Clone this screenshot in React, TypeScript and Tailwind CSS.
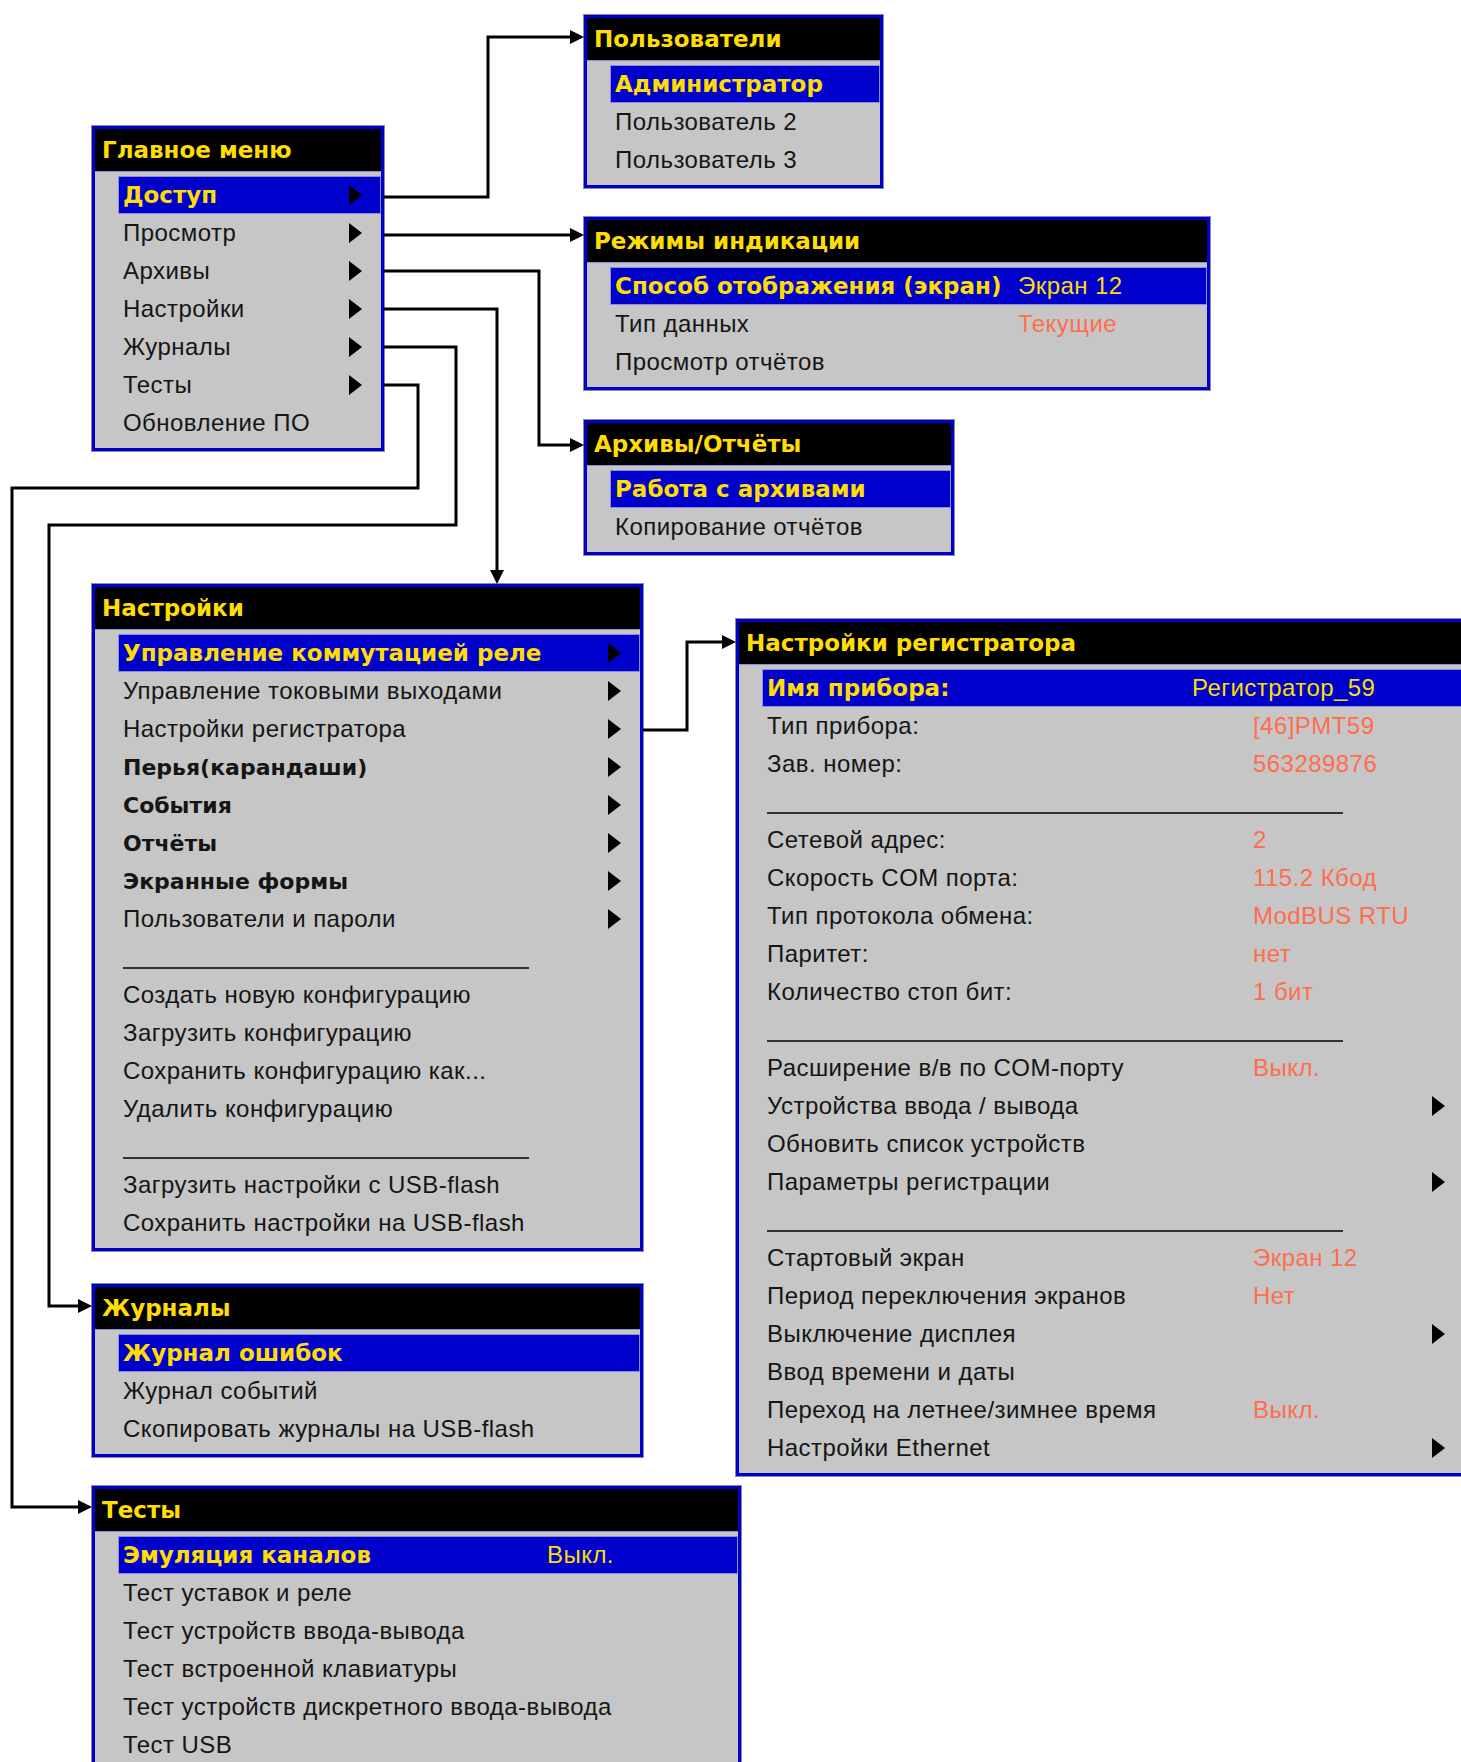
type Item = {
  label: string;
  value?: string;
  labelW?: string;
  arrow?: boolean;
  bold?: boolean;
  active?: boolean;
};
type Row = Item | { sep: string };

const menus: { title: string; box: string; rows: Row[] }[] = [
  {
    title: "Главное меню",
    box: "left-[92px] top-[126px] w-[292px]",
    rows: [
      { label: "Доступ", arrow: true, active: true },
      { label: "Просмотр", arrow: true },
      { label: "Архивы", arrow: true },
      { label: "Настройки", arrow: true },
      { label: "Журналы", arrow: true },
      { label: "Тесты", arrow: true },
      { label: "Обновление ПО" },
    ],
  },
  {
    title: "Пользователи",
    box: "left-[584px] top-[15px] w-[299px]",
    rows: [
      { label: "Администратор", active: true },
      { label: "Пользователь 2" },
      { label: "Пользователь 3" },
    ],
  },
  {
    title: "Режимы индикации",
    box: "left-[584px] top-[217px] w-[626px]",
    rows: [
      { label: "Способ отображения (экран)", value: "Экран 12", labelW: "w-[403px]", active: true },
      { label: "Тип данных", value: "Текущие", labelW: "w-[403px]" },
      { label: "Просмотр отчётов" },
    ],
  },
  {
    title: "Архивы/Отчёты",
    box: "left-[584px] top-[420px] w-[370px]",
    rows: [
      { label: "Работа с архивами", active: true },
      { label: "Копирование отчётов" },
    ],
  },
  {
    title: "Настройки",
    box: "left-[92px] top-[584px] w-[551px]",
    rows: [
      { label: "Управление коммутацией реле", arrow: true, active: true },
      { label: "Управление токовыми выходами", arrow: true },
      { label: "Настройки регистратора", arrow: true },
      { label: "Перья(карандаши)", arrow: true, bold: true },
      { label: "События", arrow: true, bold: true },
      { label: "Отчёты", arrow: true, bold: true },
      { label: "Экранные формы", arrow: true, bold: true },
      { label: "Пользователи и пароли", arrow: true },
      { sep: "w-[406px]" },
      { label: "Создать новую конфигурацию" },
      { label: "Загрузить конфигурацию" },
      { label: "Сохранить конфигурацию как..." },
      { label: "Удалить конфигурацию" },
      { sep: "w-[406px]" },
      { label: "Загрузить настройки с USB-flash" },
      { label: "Сохранить настройки на USB-flash" },
    ],
  },
  {
    title: "Настройки регистратора",
    box: "left-[736px] top-[619px] w-[731px]",
    rows: [
      { label: "Имя прибора:", value: "Регистратор_59", labelW: "w-[425px]", active: true },
      { label: "Тип прибора:", value: "[46]PMT59", labelW: "w-[486px]" },
      { label: "Зав. номер:", value: "563289876", labelW: "w-[486px]" },
      { sep: "w-[576px]" },
      { label: "Сетевой адрес:", value: "2", labelW: "w-[486px]" },
      { label: "Скорость COM порта:", value: "115.2 Кбод", labelW: "w-[486px]" },
      { label: "Тип протокола обмена:", value: "ModBUS RTU", labelW: "w-[486px]" },
      { label: "Паритет:", value: "нет", labelW: "w-[486px]" },
      { label: "Количество стоп бит:", value: "1 бит", labelW: "w-[486px]" },
      { sep: "w-[576px]" },
      { label: "Расширение в/в по COM-порту", value: "Выкл.", labelW: "w-[486px]" },
      { label: "Устройства ввода / вывода", arrow: true },
      { label: "Обновить список устройств" },
      { label: "Параметры регистрации", arrow: true },
      { sep: "w-[576px]" },
      { label: "Стартовый экран", value: "Экран 12", labelW: "w-[486px]" },
      { label: "Период переключения экранов", value: "Нет", labelW: "w-[486px]" },
      { label: "Выключение дисплея", arrow: true },
      { label: "Ввод времени и даты" },
      { label: "Переход на летнее/зимнее время", value: "Выкл.", labelW: "w-[486px]" },
      { label: "Настройки Ethernet", arrow: true },
    ],
  },
  {
    title: "Журналы",
    box: "left-[92px] top-[1284px] w-[551px]",
    rows: [
      { label: "Журнал ошибок", active: true },
      { label: "Журнал событий" },
      { label: "Скопировать журналы на USB-flash" },
    ],
  },
  {
    title: "Тесты",
    box: "left-[92px] top-[1486px] w-[649px]",
    rows: [
      { label: "Эмуляция каналов", value: "Выкл.", labelW: "w-[424px]", active: true },
      { label: "Тест уставок и реле" },
      { label: "Тест устройств ввода-вывода" },
      { label: "Тест встроенной клавиатуры" },
      { label: "Тест устройств дискретного ввода-вывода" },
      { label: "Тест USB" },
    ],
  },
];

function Triangle() {
  return (
    <svg width="13" height="20" viewBox="0 0 13 20" className="ml-auto mr-[19px] shrink-0">
      <polygon points="0,0 13,10 0,20" fill="#000" />
    </svg>
  );
}

function MenuRow({ row }: { row: Row }) {
  if ("sep" in row) {
    return (
      <div className="h-[38px] ml-[23px] pl-[5px] flex items-end pb-[7px]">
        <div className={`${row.sep} h-[2px] bg-[#333]`} />
      </div>
    );
  }
  const activeFont = "font-['DejaVu_Sans',sans-serif] font-bold text-[23px]";
  const boldFont = "font-['DejaVu_Sans',sans-serif] font-bold text-[22px]";
  const plainFont = "font-['Liberation_Sans',Arial,sans-serif] text-[24px] tracking-[0.45px]";
  const labelFont = row.active ? activeFont : row.bold ? boldFont : plainFont;
  return (
    <div
      className={`h-[38px] ml-[23px] pl-[5px] flex items-center whitespace-nowrap ${
        row.active ? "bg-[#0000cc] shadow-[inset_0_0_0_1px_#8e8ee0] text-[#ffdd00]" : "text-[#151515]"
      }`}
    >
      <span className={`${row.labelW ?? ""} ${labelFont}`}>{row.label}</span>
      {row.value && (
        <span className={`${plainFont} ${row.active ? "text-[#ffdd00]" : "text-[#ff6d4d]"}`}>{row.value}</span>
      )}
      {row.arrow && <Triangle />}
    </div>
  );
}

function Menu({ title, box, rows }: { title: string; box: string; rows: Row[] }) {
  return (
    <div className={`absolute ${box} border-[3px] border-[#0000cc] bg-[#c6c6c6] shadow-[0_0_0_1px_#8a8a9a]`}>
      <div className="h-[43px] bg-black border-b border-[#8e8ee0] flex items-center pl-[7px] text-[#ffdd00] font-['DejaVu_Sans',sans-serif] font-bold text-[23px] whitespace-nowrap">
        {title}
      </div>
      <div className="pt-[4px] pb-[6px]">
        {rows.map((r, i) => (
          <MenuRow key={i} row={r} />
        ))}
      </div>
    </div>
  );
}

function Arrow({ x, y }: { x: number; y: number }) {
  return <polygon points={`${x - 14},${y - 7} ${x},${y} ${x - 14},${y + 7}`} fill="#000" />;
}

function Connectors() {
  const line = { fill: "none", stroke: "#000", strokeWidth: 3 };
  return (
    <svg className="absolute inset-0 pointer-events-none" width="1461" height="1762">
      {/* Доступ -> Пользователи */}
      <polyline points="384,197 488,197 488,37 572,37" {...line} />
      <Arrow x={584} y={37} />
      {/* Просмотр -> Режимы индикации */}
      <polyline points="384,235 572,235" {...line} />
      <Arrow x={584} y={235} />
      {/* Архивы -> Архивы/Отчёты */}
      <polyline points="384,271 539,271 539,445 572,445" {...line} />
      <Arrow x={584} y={445} />
      {/* Настройки -> Настройки */}
      <polyline points="384,309 497,309 497,572" {...line} />
      <polygon points="490,570 504,570 497,584" fill="#000" />
      {/* Журналы */}
      <polyline points="384,347 456,347 456,525 49,525 49,1306 80,1306" {...line} />
      <Arrow x={92} y={1306} />
      {/* Тесты */}
      <polyline points="384,385 418,385 418,488 12,488 12,1507 80,1507" {...line} />
      <Arrow x={92} y={1507} />
      {/* Настройки регистратора */}
      <polyline points="643,730 687,730 687,642 724,642" {...line} />
      <Arrow x={736} y={642} />
    </svg>
  );
}

export default function App() {
  return (
    <div className="relative w-[1461px] h-[1762px] bg-white overflow-hidden">
      {menus.map((m) => (
        <Menu key={m.title} {...m} />
      ))}
      <Connectors />
    </div>
  );
}
